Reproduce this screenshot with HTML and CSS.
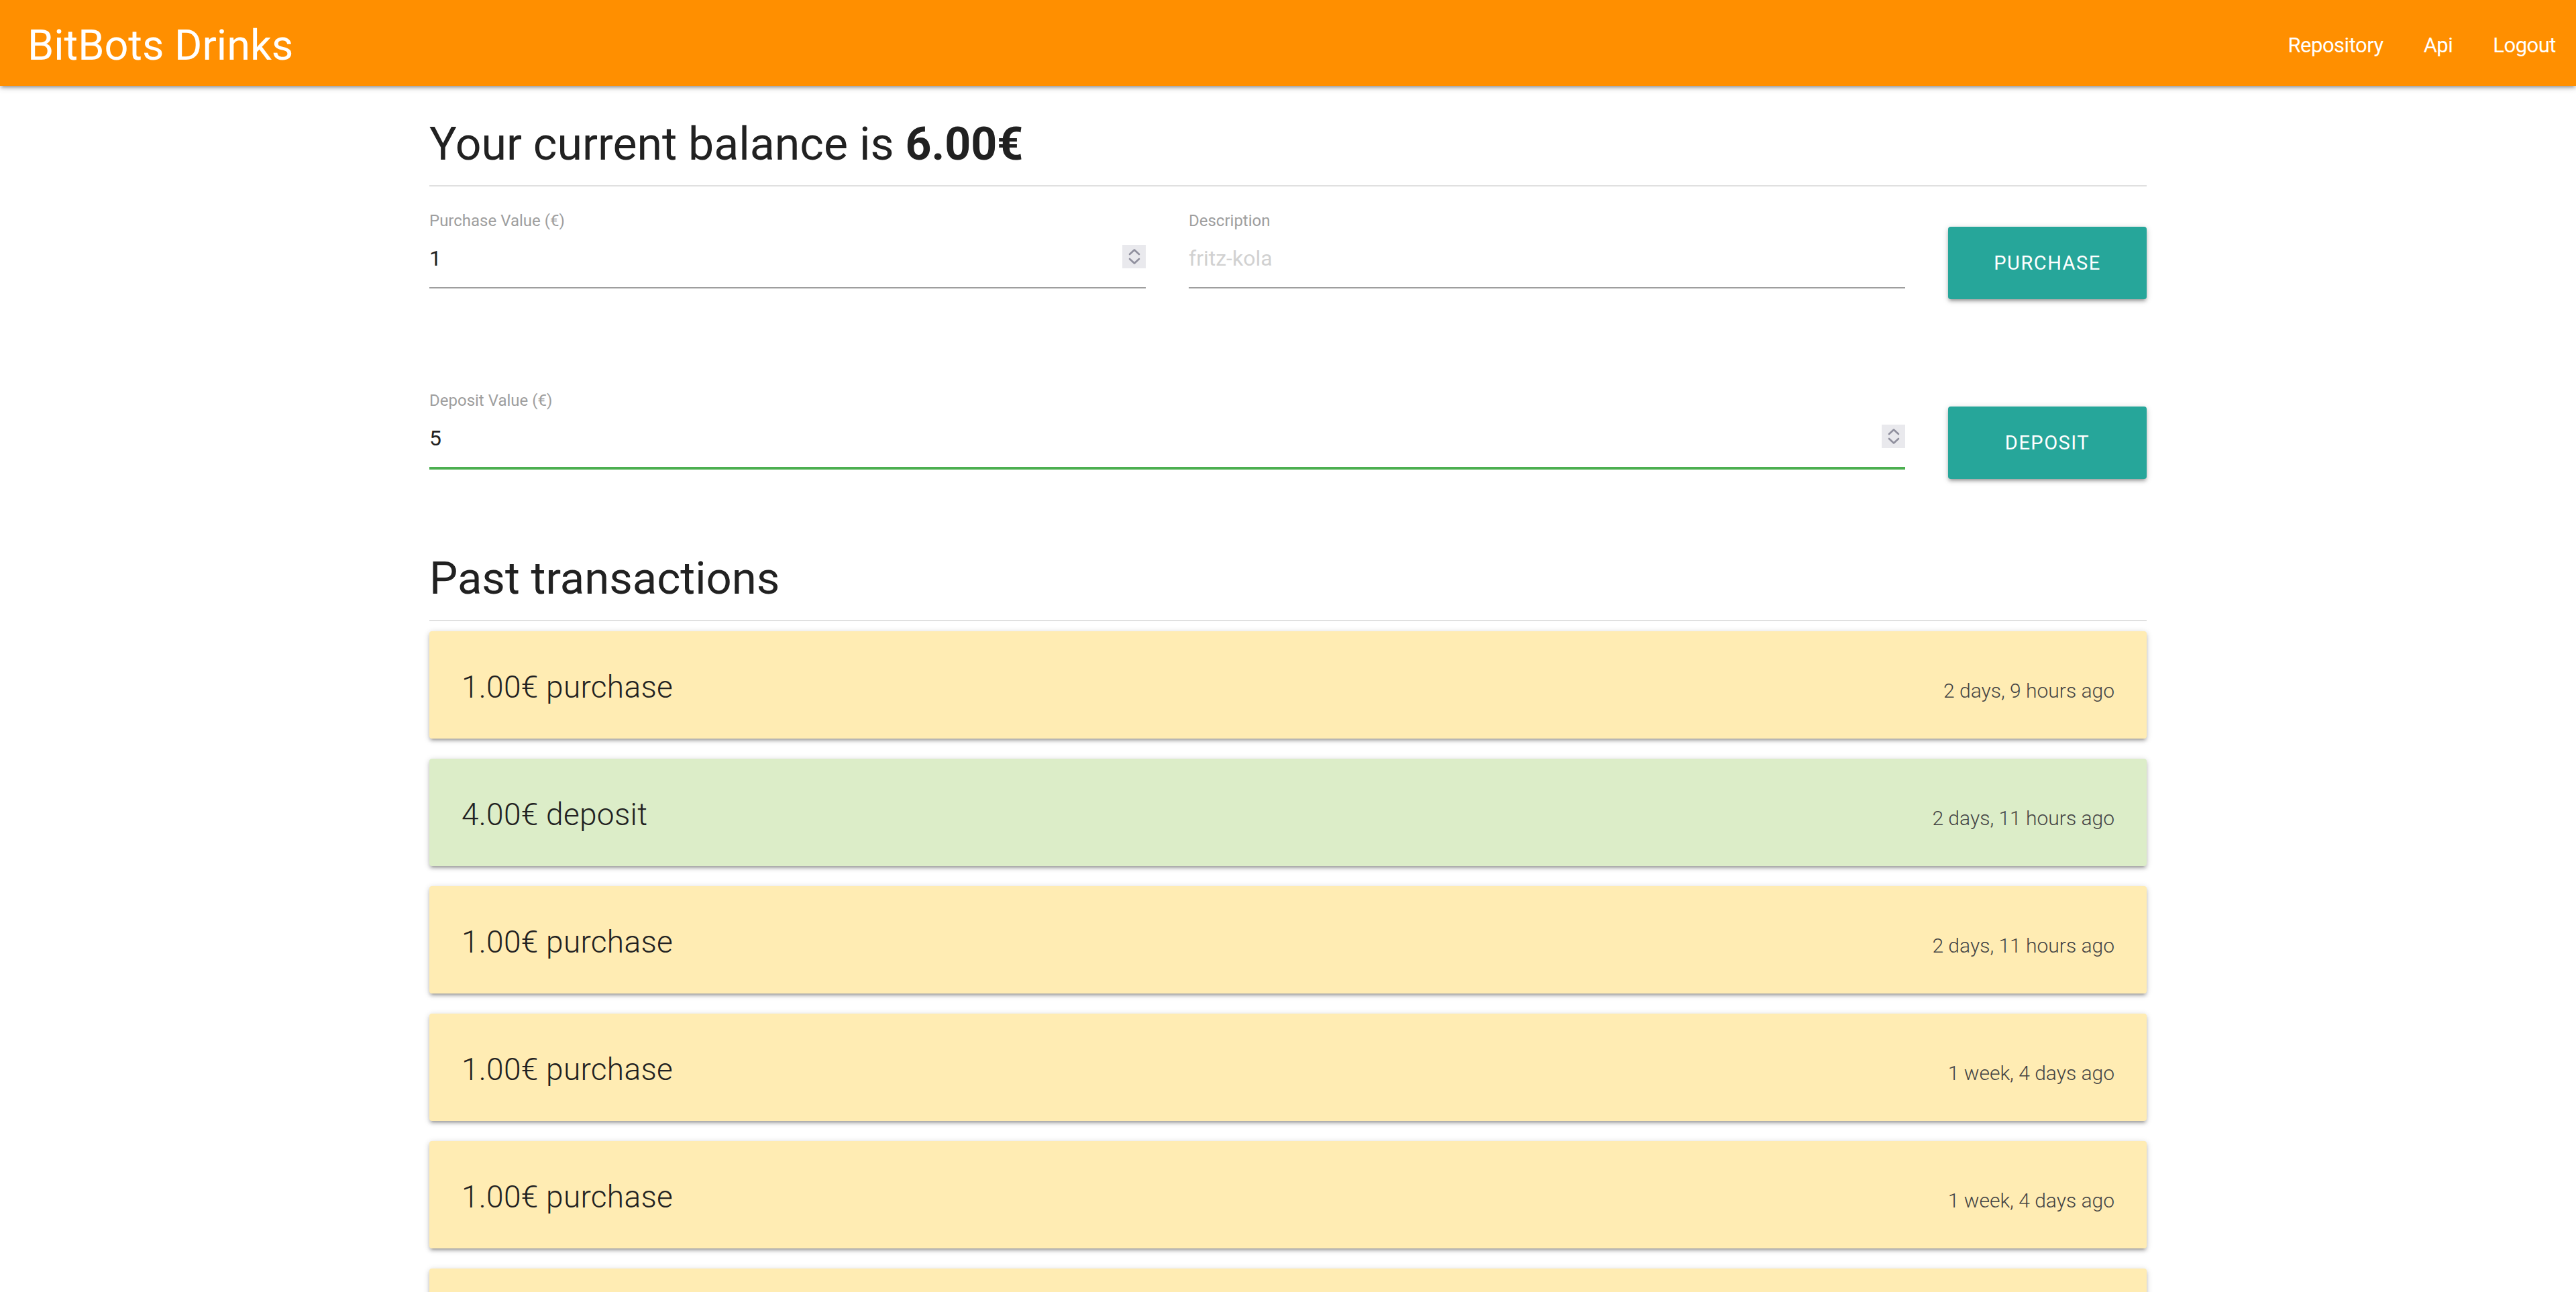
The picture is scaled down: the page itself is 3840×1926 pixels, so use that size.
FILE: index.html
```html
<!DOCTYPE html>
<html lang="en">
<head>
<meta charset="utf-8">
<title>BitBots Drinks</title>
<link rel="stylesheet" href="styles.css">
</head>
<body>
<header class="navbar">
  <a class="brand" href="#">BitBots Drinks</a>
  <nav class="links">
    <a href="#">Repository</a>
    <a href="#">Api</a>
    <a href="#">Logout</a>
  </nav>
</header>
<main class="container">
  <h4 class="heading">Your current balance is <b>6.00€</b></h4>

  <form class="form-row purchase-row">
    <div class="field">
      <label class="label">Purchase Value (€)</label>
      <div class="input-wrap">
        <input class="input" type="text" value="1">
        <span class="spinner"><svg width="35" height="35" viewBox="0 0 35 35"><path d="M11 14 L18 7.5 L25 14"/><path d="M11 21 L18 27.5 L25 21"/></svg></span>
      </div>
    </div>
    <div class="field">
      <label class="label">Description</label>
      <div class="input-wrap">
        <input class="input" type="text" placeholder="fritz-kola">
      </div>
    </div>
    <button class="btn" type="button">Purchase</button>
  </form>

  <form class="form-row deposit-row">
    <div class="field field-wide">
      <label class="label">Deposit Value (€)</label>
      <div class="input-wrap">
        <input class="input input-valid" type="text" value="5">
        <span class="spinner"><svg width="35" height="35" viewBox="0 0 35 35"><path d="M11 14 L18 7.5 L25 14"/><path d="M11 21 L18 27.5 L25 21"/></svg></span>
      </div>
    </div>
    <button class="btn" type="button">Deposit</button>
  </form>

  <h4 class="heading section-heading">Past transactions</h4>

  <ul class="transactions">
    <li class="card purchase"><span class="amount">1.00€ purchase</span><span class="time">2 days, 9 hours ago</span></li>
    <li class="card deposit"><span class="amount">4.00€ deposit</span><span class="time">2 days, 11 hours ago</span></li>
    <li class="card purchase"><span class="amount">1.00€ purchase</span><span class="time">2 days, 11 hours ago</span></li>
    <li class="card purchase"><span class="amount">1.00€ purchase</span><span class="time">1 week, 4 days ago</span></li>
    <li class="card purchase"><span class="amount">1.00€ purchase</span><span class="time">1 week, 4 days ago</span></li>
    <li class="card purchase"><span class="amount">1.00€ purchase</span><span class="time">1 week, 5 days ago</span></li>
  </ul>
</main>
</body>
</html>
```

FILE: styles.css
```css
html {
  scrollbar-width: none;
}
html::-webkit-scrollbar {
  display: none;
}
body {
  margin: 0;
  background: #ffffff;
  font-family: Roboto, "Liberation Sans", sans-serif;
  color: rgba(0, 0, 0, 0.87);
}

.navbar {
  display: flex;
  justify-content: space-between;
  align-items: flex-start;
  height: 128px;
  padding-top: 8px;
  box-sizing: border-box;
  background: #ff8f00;
  box-shadow: 0 4px 4px 0 rgba(0,0,0,0.14), 0 6px 2px -4px rgba(0,0,0,0.12), 0 2px 10px 0 rgba(0,0,0,0.2);
  position: relative;
  z-index: 2;
}
.brand {
  color: #fff;
  text-decoration: none;
  font-size: 63px;
  line-height: 120px;
  padding-left: 41px;
}
.links {
  display: flex;
}
.links a {
  color: #fff;
  text-decoration: none;
  font-size: 31px;
  letter-spacing: -0.5px;
  line-height: 120px;
  padding: 0 30px;
}

.container {
  width: 2560px;
  margin: 0 auto;
}

.heading {
  margin: 50px 0 0;
  font-size: 68px;
  font-weight: 400;
  line-height: 75px;
  padding-bottom: 23px;
  border-bottom: 2px solid #e0e0e0;
  color: #212121;
}
.heading b {
  font-weight: 700;
}
.section-heading {
  margin-top: 111px;
  padding-bottom: 24px;
  font-size: 67px;
}

.form-row {
  display: grid;
  grid-template-columns: 1fr 1fr 296px;
  column-gap: 64px;
  align-items: start;
  margin: 0;
}
.purchase-row {
  margin-top: 39px;
}
.deposit-row {
  margin-top: 139px;
}
.field-wide {
  grid-column: span 2;
}
.label {
  display: block;
  font-size: 24px;
  line-height: 24px;
  color: #9e9e9e;
  margin-bottom: 17px;
}
.input-wrap {
  position: relative;
}
.input {
  display: block;
  width: 100%;
  box-sizing: border-box;
  height: 72px;
  padding: 0 0 16px;
  margin: 0;
  border: 0;
  border-bottom: 2px solid #9e9e9e;
  background: transparent;
  font-family: Roboto, "Liberation Sans", sans-serif;
  font-size: 32px;
  font-weight: 400;
  color: #212121;
  outline: none;
  border-radius: 0;
}
.input::placeholder {
  color: #d1d1d1;
}
.input-valid {
  border-bottom-color: #4caf50;
  box-shadow: 0 2px 0 0 #4caf50;
}
.spinner {
  position: absolute;
  top: 7px;
  right: 0;
  width: 35px;
  height: 35px;
  background: #e9e9ed;
  display: flex;
}
.spinner path {
  fill: none;
  stroke: #8f8f9d;
  stroke-width: 2.6;
  stroke-linecap: round;
  stroke-linejoin: round;
}

.btn {
  margin-top: 21px;
  height: 108px;
  border: 0;
  border-radius: 4px;
  background: #26a69a;
  color: #fff;
  font-family: Roboto, "Liberation Sans", sans-serif;
  font-size: 29px;
  letter-spacing: 1.5px;
  text-transform: uppercase;
  box-shadow: 0 4px 4px 0 rgba(0,0,0,0.14), 0 6px 2px -4px rgba(0,0,0,0.12), 0 2px 10px 0 rgba(0,0,0,0.2);
  padding: 0;
}

.transactions {
  list-style: none;
  margin: 15px 0 0;
  padding: 0;
  display: flex;
  flex-direction: column;
  gap: 30px;
}
.card {
  display: flex;
  justify-content: space-between;
  align-items: baseline;
  height: 160px;
  box-sizing: border-box;
  padding: 51px 48px 45px;
  border-radius: 4px;
  box-shadow: 0 4px 4px 0 rgba(0,0,0,0.14), 0 6px 2px -4px rgba(0,0,0,0.12), 0 2px 10px 0 rgba(0,0,0,0.2);
}
.purchase {
  background: #ffecb3;
}
.deposit {
  background: #dcedc8;
}
.amount {
  font-size: 46px;
  font-weight: 300;
  letter-spacing: 0.3px;
  line-height: 64px;
  color: #212121;
}
.time {
  font-size: 30px;
  font-weight: 300;
  color: #444;
}
```
